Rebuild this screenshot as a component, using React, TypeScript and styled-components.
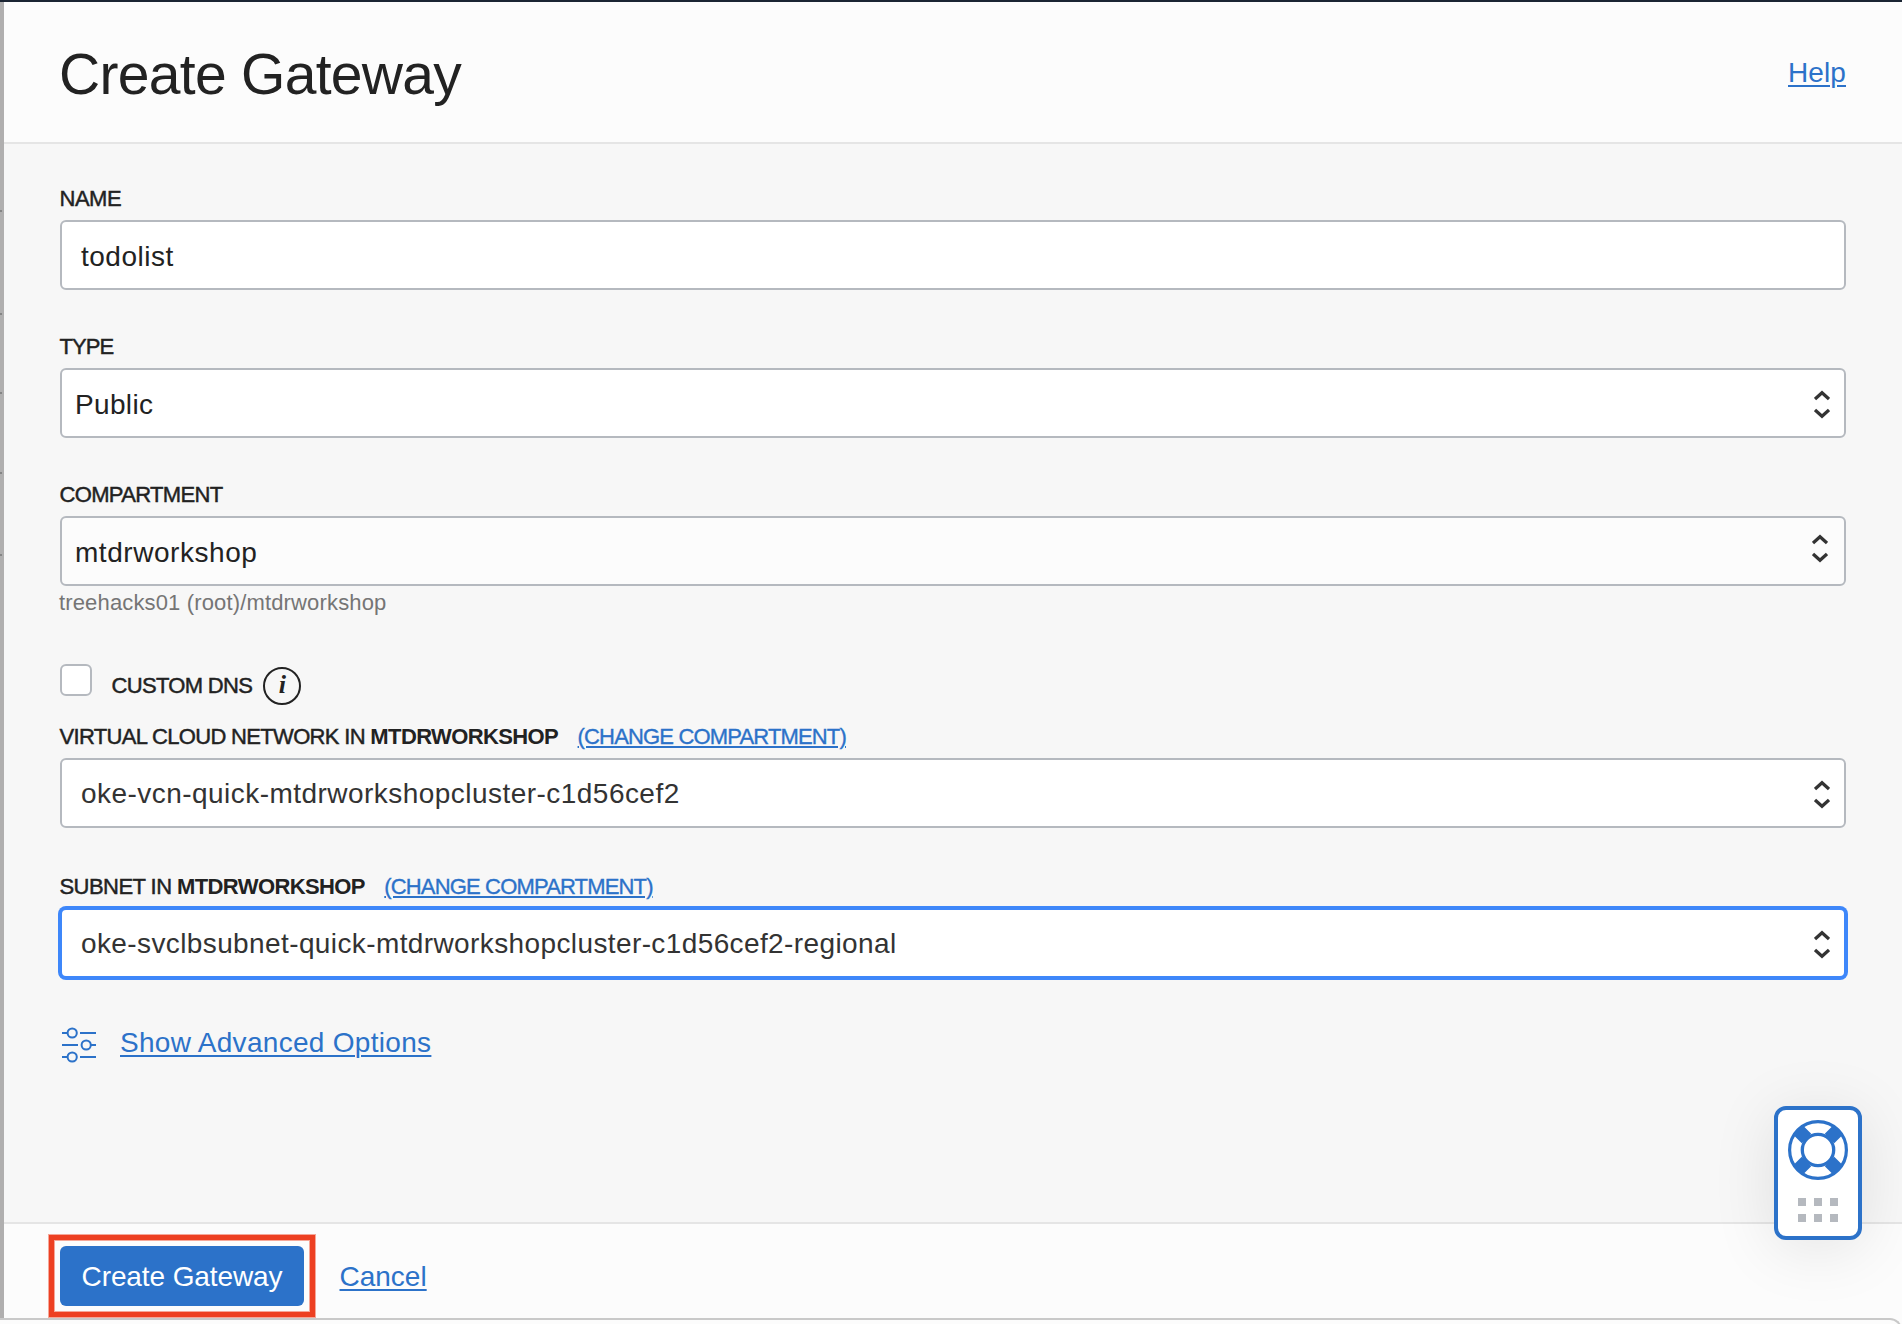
import React from "react";
import styled, { createGlobalStyle } from "styled-components";

const GlobalStyle = createGlobalStyle`
  *, *::before, *::after { box-sizing: border-box; }
  html, body { margin: 0; padding: 0; overflow: hidden; }
  body {
    background: #fcfcfc;
    color: #222;
    font-family: "Liberation Sans", Arial, sans-serif;
    font-size: 28px;
  }
`;

const Page = styled.div`
  display: flex;
  flex-direction: column;
  width: 100%;
  height: 1324px;
  background: #fcfcfc;
  overflow: hidden;
`;

const TopBar = styled.div`
  flex: none;
  height: 2px;
  background: #1b2533;
`;

const Main = styled.div`
  flex: none;
  height: 1316px;
  display: flex;
`;

const Backdrop = styled.div`
  flex: none;
  width: 4px;
  background: #b0afaf;
`;

const RowEdge = styled.div<{ $gap: number }>`
  width: 2px;
  height: 2px;
  margin-top: ${(p) => p.$gap}px;
  background: #858585;
`;

const Panel = styled.section`
  flex: 1;
  display: flex;
  flex-direction: column;
`;

const Header = styled.header`
  flex: none;
  height: 142px;
  padding: 0 56px 0 55px;
  display: flex;
  align-items: flex-start;
  justify-content: space-between;
  border-bottom: 2px solid #e5e5e5;
`;

const Title = styled.h1`
  margin: 40px 0 0;
  font-size: 57px;
  line-height: 64px;
  font-weight: 400;
  letter-spacing: -0.7px;
`;

const Link = styled.a<{ $spacing?: number }>`
  color: #2c72c9;
  font-size: 28px;
  line-height: 35px;
  letter-spacing: ${(p) => p.$spacing ?? 0}px;
  text-decoration: underline;
  text-decoration-thickness: 2px;
  text-underline-offset: 3px;
`;

const HelpLink = styled(Link)`
  margin-top: 53px;
`;

const Body = styled.main`
  flex: 1;
  padding: 40px 56px 0 55px;
  background: #f7f7f7;
`;

const Field = styled.div<{ $gap: number }>`
  margin-bottom: ${(p) => p.$gap}px;
`;

const Label = styled.div<{ $spacing?: number }>`
  display: flex;
  height: 28px;
  margin-bottom: 8px;
  padding-left: 0.5px;
  font-size: 22px;
  line-height: 29px;
  letter-spacing: ${(p) => p.$spacing ?? -0.67}px;
  white-space: pre;
  -webkit-text-stroke: 0.45px currentColor;
`;

const Scope = styled.b`
  font-weight: 700;
  letter-spacing: -0.62px;
  -webkit-text-stroke: 0;
`;

const ScopeLink = styled.a`
  margin-left: 19.5px;
  color: #2c72c9;
  letter-spacing: -0.84px;
  text-decoration: underline;
  text-decoration-thickness: 2px;
  text-underline-offset: 2px;
  -webkit-text-stroke: 0.35px currentColor;
`;

const Control = styled.div<{ $inset: number; $focused?: boolean; $muted?: boolean }>`
  height: 70px;
  margin-left: 1px;
  padding: 0 14px 0 ${(p) => p.$inset}px;
  display: flex;
  align-items: flex-start;
  justify-content: space-between;
  border: 2px solid ${(p) => (p.$focused ? "#3e87fa" : "#b5b9bf")};
  border-radius: 6px;
  background: ${(p) => (p.$muted ? "#fcfcfc" : "#fff")};
  box-shadow: ${(p) => (p.$focused ? "0 0 0 2px #3e87fa" : "none")};
`;

const Value = styled.span<{ $top: number; $soft?: boolean; $spacing?: number }>`
  margin-top: ${(p) => p.$top}px;
  line-height: 35px;
  letter-spacing: ${(p) => p.$spacing ?? 0.5}px;
  color: ${(p) => (p.$soft ? "#333" : "#222")};
`;

const ChevronSvg = styled.svg<{ $top: number; $right?: number }>`
  flex: none;
  margin-top: ${(p) => p.$top}px;
  margin-right: ${(p) => p.$right ?? 0}px;
`;

const Hint = styled.div`
  margin-top: 2px;
  height: 28px;
  font-size: 22px;
  line-height: 29px;
  letter-spacing: 0.15px;
  color: #757575;
`;

const CheckRow = styled.div`
  height: 58px;
  margin: 48px 0 0 1px;
  display: flex;
  align-items: flex-start;
`;

const Checkbox = styled.div`
  width: 32px;
  height: 32px;
  border: 2px solid #b5b9bf;
  border-radius: 6px;
  background: #fff;
`;

const CheckLabel = styled(Label)`
  margin: 7px 0 0 19px;
`;

const InfoBadge = styled.span`
  width: 38px;
  height: 38px;
  margin: 3px 0 0 11px;
  border: 2px solid #222;
  border-radius: 50%;
  font: italic 700 26px/32px "Liberation Serif", "Times New Roman", serif;
  text-align: center;
`;

const AdvancedRow = styled.div`
  margin: 49px 0 0 3px;
  display: flex;
  align-items: flex-start;
`;

const AdvancedLink = styled(Link)`
  margin: -2px 0 0 24px;
`;

const Footer = styled.footer`
  flex: none;
  height: 96px;
  padding: 22px 56px 0;
  display: flex;
  align-items: flex-start;
  border-top: 2px solid #e5e5e5;
`;

const Callout = styled.div`
  position: relative;
  &::after {
    content: "";
    position: absolute;
    inset: -11px;
    border: 5px solid #ed4022;
    box-shadow: 0 0 0 1px rgba(237, 64, 34, 0.45), inset 0 0 0 1px rgba(237, 64, 34, 0.45);
    pointer-events: none;
  }
`;

const PrimaryButton = styled.button`
  display: block;
  width: 244px;
  height: 60px;
  padding: 1px 0 0;
  border: 0;
  border-radius: 6px;
  background: #2c72c9;
  color: #fff;
  font: 400 28px/59px "Liberation Sans", Arial, sans-serif;
  letter-spacing: -0.1px;
  white-space: nowrap;
`;

const CancelLink = styled(Link)`
  margin: 13px 0 0 35.5px;
`;

const WindowEdge = styled.div`
  flex: none;
  height: 24px;
  border: solid #c9c9c9;
  border-width: 2px 2px 0 0;
  border-top-right-radius: 12px;
`;

const SupportWidget = styled.aside`
  position: fixed;
  top: 1106px;
  right: 40px;
  width: 88px;
  height: 134px;
  padding-top: 10px;
  display: flex;
  flex-direction: column;
  align-items: center;
  gap: 18px;
  border: 4px solid #2c72c9;
  border-radius: 12px;
  background: #fff;
  box-shadow: 0 8px 64px rgba(0, 0, 0, 0.1);
`;

const DragHandle = styled.div`
  display: grid;
  grid-template-columns: repeat(3, 8px);
  gap: 8px;
`;

const Dot = styled.i`
  height: 8px;
  background: #b5b9bf;
`;

const Chevrons = ({ top = 20, right = 0 }: { top?: number; right?: number }) => (
  <ChevronSvg
    $top={top}
    $right={right}
    width="16"
    height="30"
    viewBox="0 0 16 30"
    fill="none"
    stroke="#333"
    strokeWidth="3.3"
  >
    <path d="M1 9.100 8 2.700l7 6.400M1 19.900l7 6.400 7-6.400" />
  </ChevronSvg>
);

const SlidersIcon = () => (
  <svg width="34" height="36" viewBox="0 0 34 36" fill="none" stroke="#2c72c9" strokeWidth="2">
    <path d="M0 6h5.500M18 6h16M0 18h16M28.500 18H34M0 30h5.500M18 30h16" />
    <circle cx="10.200" cy="6" r="4.600" />
    <circle cx="24.200" cy="18" r="4.600" />
    <circle cx="10.200" cy="30" r="4.600" />
  </svg>
);

const LifeRing = () => (
  <svg width="60" height="60" viewBox="-30 -30 60 60" fill="none" stroke="#2c72c9">
    <circle r="28.400" strokeWidth="3.200" />
    <circle r="15.700" strokeWidth="3.300" />
    <path
      d="M-19.800-19.800-11.500-11.500M19.800-19.800 11.500-11.500M-19.800 19.800-11.500 11.500M19.800 19.800 11.500 11.500"
      strokeWidth="13.400"
    />
  </svg>
);

export default function App() {
  return (
    <Page>
      <GlobalStyle />
      <TopBar />
      <Main>
        <Backdrop>
          {[208, 101, 77, 78, 80].map((gap, i) => (
            <RowEdge key={i} $gap={gap} />
          ))}
        </Backdrop>
        <Panel>
          <Header>
            <Title>Create Gateway</Title>
            <HelpLink $spacing={0.1}>Help</HelpLink>
          </Header>
          <Body>
            <Field $gap={42}>
              <Label $spacing={-0.5}>NAME</Label>
              <Control $inset={19}>
                <Value $top={17}>todolist</Value>
              </Control>
            </Field>
            <Field $gap={42}>
              <Label $spacing={-0.95}>TYPE</Label>
              <Control $inset={13}>
                <Value $top={17} $spacing={0.35}>Public</Value>
                <Chevrons />
              </Control>
            </Field>
            <Field $gap={0}>
              <Label>COMPARTMENT</Label>
              <Control $inset={13} $muted>
                <Value $top={17} $spacing={0.55}>mtdrworkshop</Value>
                <Chevrons top={16} right={2} />
              </Control>
              <Hint>treehacks01 (root)/mtdrworkshop</Hint>
            </Field>
            <CheckRow>
              <Checkbox />
              <CheckLabel>CUSTOM DNS</CheckLabel>
              <InfoBadge>i</InfoBadge>
            </CheckRow>
            <Field $gap={44}>
              <Label>
                {"VIRTUAL CLOUD NETWORK IN "}
                <Scope>MTDRWORKSHOP</Scope>
                <ScopeLink>(CHANGE COMPARTMENT)</ScopeLink>
              </Label>
              <Control $inset={19}>
                <Value $top={16} $spacing={0.46} $soft>
                  oke-vcn-quick-mtdrworkshopcluster-c1d56cef2
                </Value>
                <Chevrons />
              </Control>
            </Field>
            <Field $gap={0}>
              <Label $spacing={-0.55}>
                {"SUBNET IN "}
                <Scope>MTDRWORKSHOP</Scope>
                <ScopeLink>(CHANGE COMPARTMENT)</ScopeLink>
              </Label>
              <Control $inset={19} $focused>
                <Value $top={16} $spacing={0.39} $soft>
                  oke-svclbsubnet-quick-mtdrworkshopcluster-c1d56cef2-regional
                </Value>
                <Chevrons />
              </Control>
            </Field>
            <AdvancedRow>
              <SlidersIcon />
              <AdvancedLink $spacing={0.3}>Show Advanced Options</AdvancedLink>
            </AdvancedRow>
          </Body>
          <Footer>
            <Callout>
              <PrimaryButton>Create Gateway</PrimaryButton>
            </Callout>
            <CancelLink>Cancel</CancelLink>
          </Footer>
        </Panel>
      </Main>
      <WindowEdge />
      <SupportWidget>
        <LifeRing />
        <DragHandle>
          {Array.from({ length: 6 }, (_, i) => (
            <Dot key={i} />
          ))}
        </DragHandle>
      </SupportWidget>
    </Page>
  );
}
